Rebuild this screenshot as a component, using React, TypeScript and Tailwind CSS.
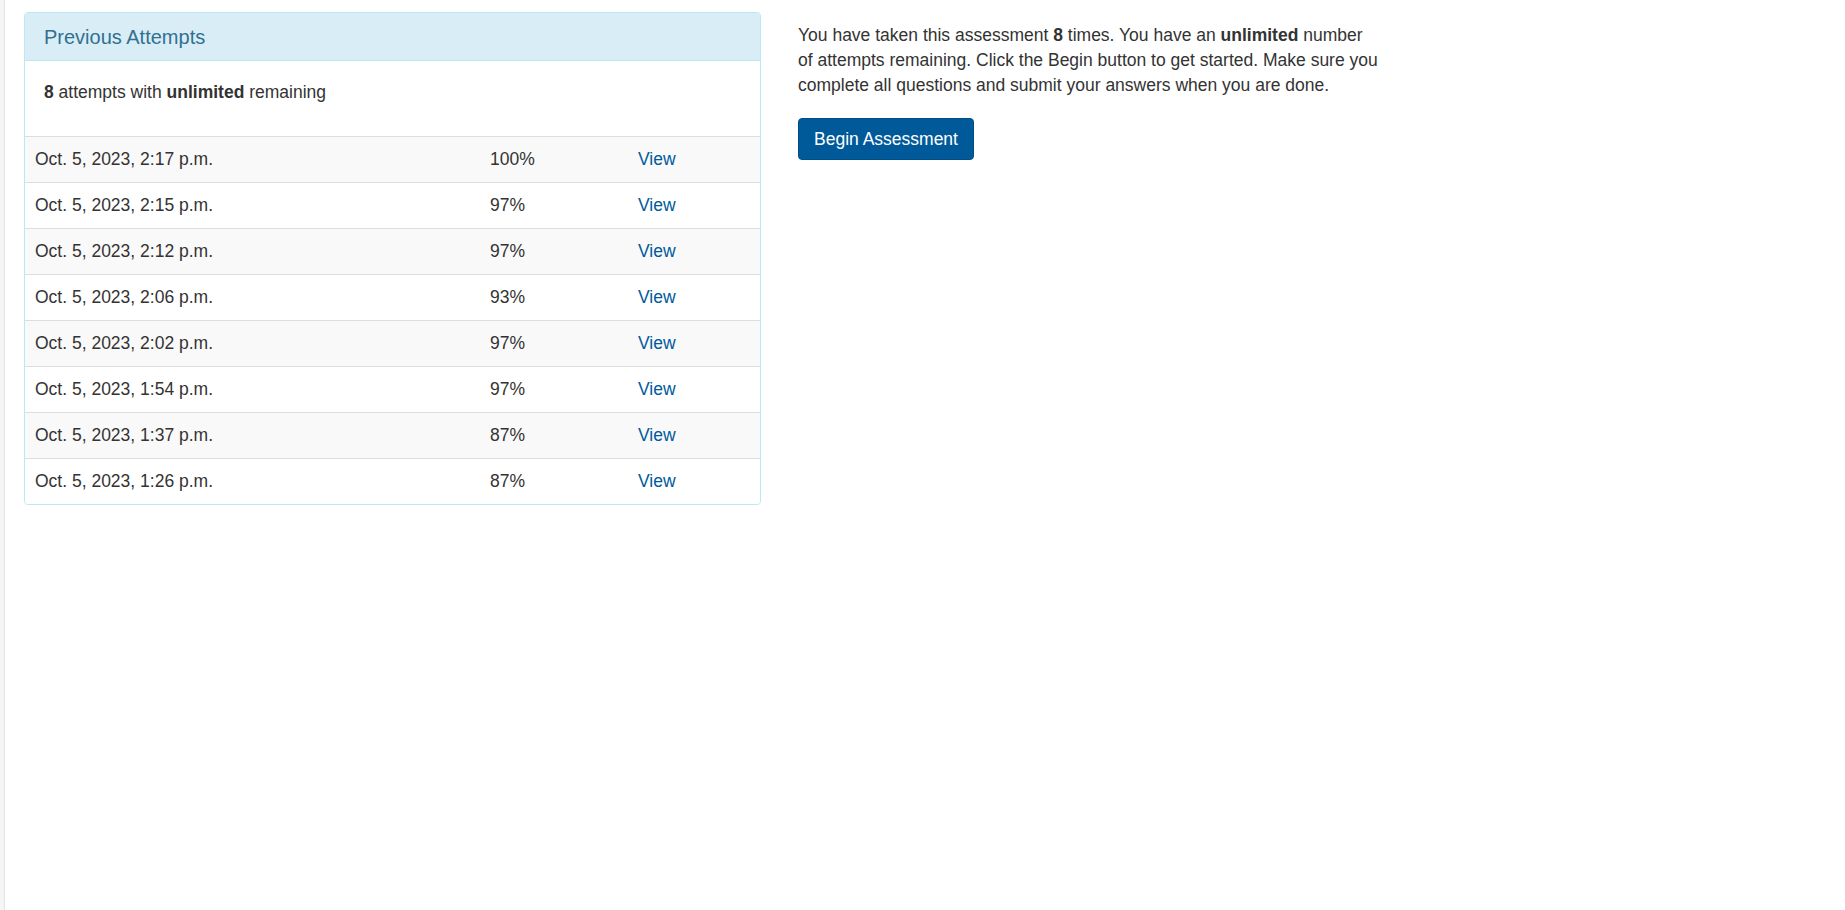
const attempts = [
  { date: 'Oct. 5, 2023, 2:17 p.m.', score: '100%' },
  { date: 'Oct. 5, 2023, 2:15 p.m.', score: '97%' },
  { date: 'Oct. 5, 2023, 2:12 p.m.', score: '97%' },
  { date: 'Oct. 5, 2023, 2:06 p.m.', score: '93%' },
  { date: 'Oct. 5, 2023, 2:02 p.m.', score: '97%' },
  { date: 'Oct. 5, 2023, 1:54 p.m.', score: '97%' },
  { date: 'Oct. 5, 2023, 1:37 p.m.', score: '87%' },
  { date: 'Oct. 5, 2023, 1:26 p.m.', score: '87%' },
];

export default function App() {
  return (
    <div
      className="flex min-h-screen bg-white text-[17.5px] leading-[25px] text-[#333]"
      style={{ fontFamily: '"Liberation Sans", Arial, Helvetica, sans-serif' }}
    >
      {/* left gutter strip */}
      <div className="w-[5px] shrink-0 border-r border-[#e4e4e4] bg-[#f5f5f5]" />

      <div className="flex items-start pl-[19px] pt-[12px]">
        {/* Previous attempts panel */}
        <div className="w-[737px] shrink-0 overflow-hidden rounded-[4px] border border-[#bce8f1] bg-white">
          <div className="border-b border-[#bce8f1] bg-[#d9edf7] px-[19px] py-[12.5px]">
            <h3 className="text-[20px] leading-[22px] text-[#31708f]">Previous Attempts</h3>
          </div>
          <div className="px-[19px] py-[18.75px]">
            <p className="mb-[12.5px]">
              <b>8</b> attempts with <b>unlimited</b> remaining
            </p>
          </div>
          <div>
            {attempts.map((a, i) => (
              <div
                key={i}
                className={`grid grid-cols-[455px_148px_1fr] border-t border-[#ddd] ${i % 2 === 0 ? 'bg-[#f9f9f9]' : 'bg-white'}`}
              >
                <div className="px-[10px] py-[10px]">{a.date}</div>
                <div className="px-[10px] py-[10px]">{a.score}</div>
                <div className="px-[10px] py-[10px]">
                  <a href="#" className="text-[#005a9c]">View</a>
                </div>
              </div>
            ))}
          </div>
        </div>

        {/* Intro and begin */}
        <div className="ml-[37px] w-[582px] shrink-0 pt-[11px]">
          <p>
            You have taken this assessment <b>8</b> times. You have an <b>unlimited</b> number of attempts
            remaining. Click the Begin button to get started. Make sure you complete all questions and submit
            your answers when you are done.
          </p>
          <button className="mt-[20px] rounded-[4px] border border-[#004f87] bg-[#005a9a] px-[15px] py-[7.5px] text-white">
            Begin Assessment
          </button>
        </div>
      </div>
    </div>
  );
}
